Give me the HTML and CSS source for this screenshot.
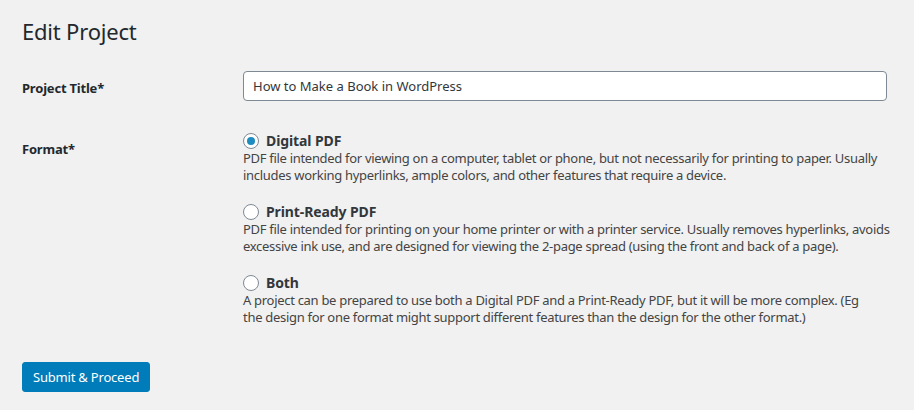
FILE: index.html
```html
<!DOCTYPE html>
<html lang="en">
<head>
    <meta charset="UTF-8">
    <meta name="viewport" content="width=device-width, initial-scale=1.0">
    <title>Edit Project</title>
    <link rel="stylesheet" href="styles.css">
</head>
<body>
    <div class="wrap">
        <h1>Edit Project</h1>

        <form class="project-form">
            <div class="form-row title-row">
                <label class="row-label" for="projectTitle">Project Title*</label>
                <div class="row-field">
                    <input type="text" id="projectTitle" class="text-input" value="How to Make a Book in WordPress">
                </div>
            </div>

            <div class="form-row format-row">
                <div class="row-label">Format*</div>
                <div class="row-field">
                    <div class="format-option">
                        <label class="option-label">
                            <input type="radio" name="format" value="digital" checked>
                            <span>Digital PDF</span>
                        </label>
                        <p class="option-desc">PDF file intended for viewing on a computer, tablet or phone, but not necessarily for printing to paper. Usually<br>includes working hyperlinks, ample colors, and other features that require a device.</p>
                    </div>
                    <div class="format-option">
                        <label class="option-label">
                            <input type="radio" name="format" value="print">
                            <span>Print-Ready PDF</span>
                        </label>
                        <p class="option-desc">PDF file intended for printing on your home printer or with a printer service. Usually removes hyperlinks, avoids<br>excessive ink use, and are designed for viewing the 2-page spread (using the front and back of a page).</p>
                    </div>
                    <div class="format-option">
                        <label class="option-label">
                            <input type="radio" name="format" value="both">
                            <span>Both</span>
                        </label>
                        <p class="option-desc">A project can be prepared to use both a Digital PDF and a Print-Ready PDF, but it will be more complex. (Eg<br>the design for one format might support different features than the design for the other format.)</p>
                    </div>
                </div>
            </div>

            <button type="button" class="button-primary">Submit &amp; Proceed</button>
        </form>
    </div>
</body>
</html>
```

FILE: styles.css
```css
body {
    margin: 0;
    background: #f1f1f1;
    color: #444;
    font-family: "Noto Sans", "Open Sans", sans-serif;
    font-size: 13px;
    letter-spacing: -0.2px;
}
.wrap {
    padding: 0 20px 0 22px;
}
h1 {
    margin: 0;
    padding: 16px 0 0;
    font-size: 22px;
    font-weight: 400;
    line-height: 30px;
    color: #23282d;
}

/* form rows: label column + field column */
.form-row {
    display: grid;
    grid-template-columns: 221px 1fr;
}
.title-row {
    margin-top: 25px;
}
.format-row {
    margin-top: 31px;
}
.row-label {
    font-size: 13px;
    font-weight: 700;
    line-height: 18px;
    color: #23282d;
    padding-top: 8px;
}
.text-input {
    box-sizing: border-box;
    width: 99%;
    height: 30px;
    margin: 0;
    padding: 0 9px;
    border: 1px solid #7e8993;
    border-radius: 4px;
    background: #fff;
    color: #32373c;
    font-family: inherit;
    font-size: 13px;
    letter-spacing: 0;
}

.format-option {
    margin-bottom: 19px;
}
.format-option:last-child {
    margin-bottom: 0;
}
.option-label {
    display: flex;
    align-items: center;
    gap: 7px;
    font-size: 14px;
    font-weight: 700;
    line-height: 18px;
    letter-spacing: -0.1px;
    color: #32373c;
}
.option-label input {
    appearance: none;
    -webkit-appearance: none;
    box-sizing: border-box;
    width: 16px;
    height: 16px;
    margin: 0;
    border: 1px solid #7e8993;
    border-radius: 50%;
    background: #fff;
    display: grid;
    place-items: center;
}
.option-label input:checked::before {
    content: "";
    width: 8px;
    height: 8px;
    border-radius: 50%;
    background: #1e8cbe;
}
.option-desc {
    margin: 0;
    line-height: 17px;
    letter-spacing: -0.3px;
}

.button-primary {
    margin-top: 36px;
    height: 30px;
    padding: 0 10px;
    border: 1px solid #007cba;
    border-radius: 3px;
    background: #007cba;
    color: #fff;
    font-family: inherit;
    font-size: 13px;
    letter-spacing: -0.2px;
    cursor: pointer;
}
```
